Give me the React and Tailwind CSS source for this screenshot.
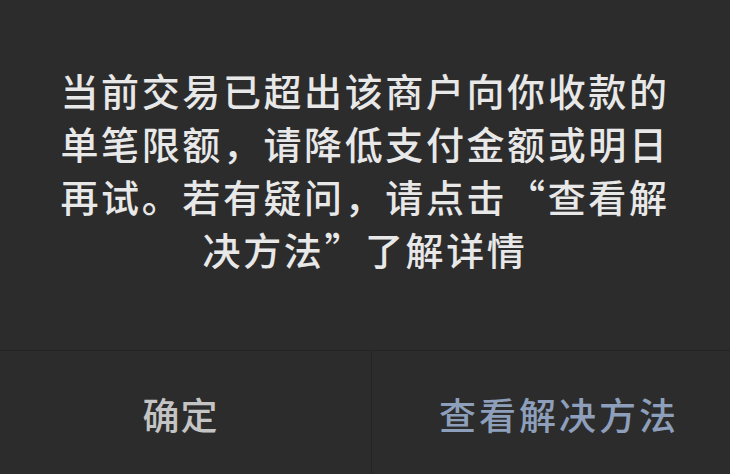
import React from 'react';

const message = '当前交易已超出该商户向你收款的单笔限额，请降低支付金额或明日再试。若有疑问，请点击“查看解决方法”了解详情';

const LimitDialog = () => {
  return (
    <div
      lang="zh-CN"
      className="w-[730px] h-[474px] bg-[#2c2c2c] flex flex-col overflow-hidden"
      style={{ fontFamily: '"Noto Sans CJK SC", "Noto Sans", sans-serif' }}
    >
      {/* 提示内容 */}
      <div className="h-[350px] pt-[63px] flex justify-center">
        <p className="w-[612px] text-center text-[38px] font-medium leading-[53px] tracking-[2.6px] text-[#e8e8e8]">
          {message}
        </p>
      </div>

      {/* 底部按钮 */}
      <div className="flex-1 flex border-t border-[#242424]">
        <button className="w-[372px] flex items-center justify-center pt-[4px] pr-[10px] text-[37px] font-medium tracking-[1px] text-[#c4c4c4] border-r border-[#242424]">
          确定
        </button>
        <button className="flex-1 flex items-center justify-center pt-[4px] pl-[16px] text-[37px] font-medium tracking-[3px] text-[#8d9fba]">
          查看解决方法
        </button>
      </div>
    </div>
  );
};

export default function App() {
  return <LimitDialog />;
}
